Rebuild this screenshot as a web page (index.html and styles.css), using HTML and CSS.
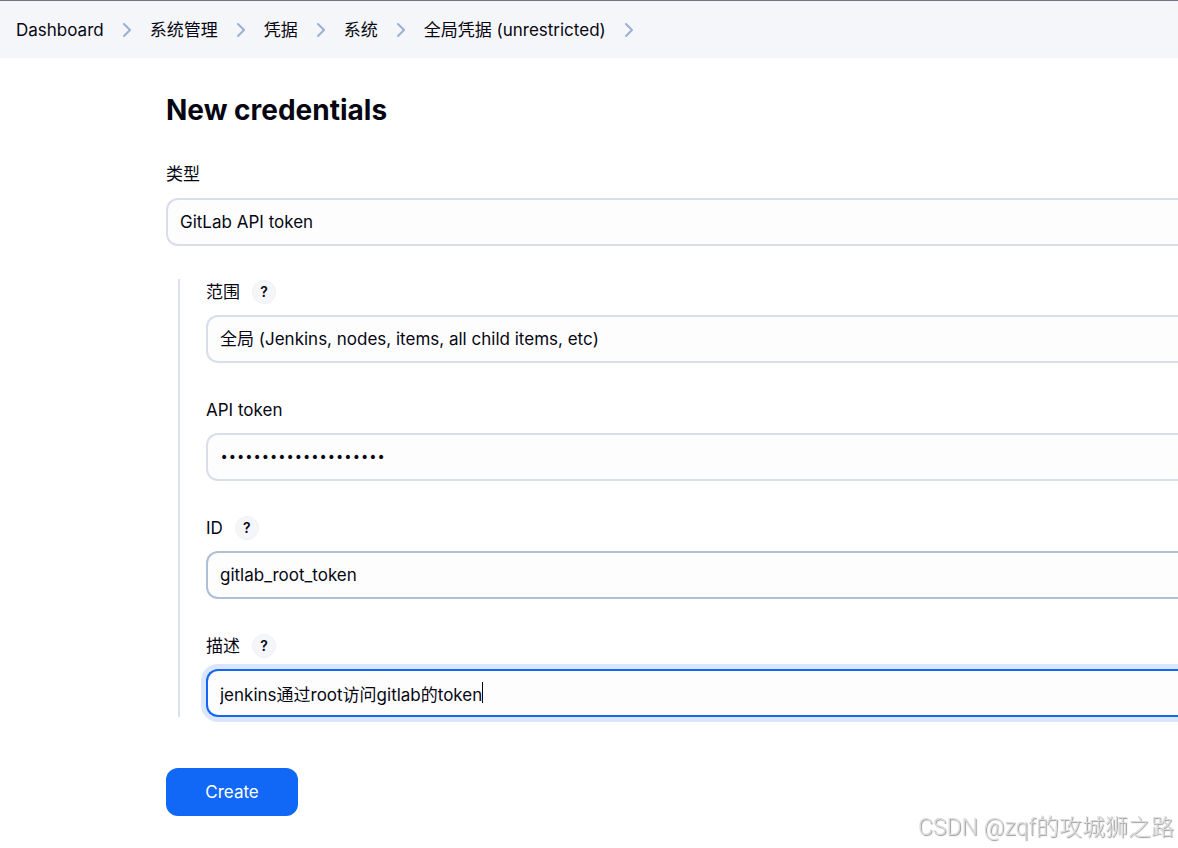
FILE: index.html
```html
<!DOCTYPE html>
<html lang="zh-CN">
<head>
    <meta charset="UTF-8">
    <meta name="viewport" content="width=device-width, initial-scale=1.0">
    <title>New credentials [Jenkins]</title>
    <link rel="stylesheet" href="styles.css">
</head>
<body>
    <nav class="breadcrumbs">
        <a href="#">Dashboard</a>
        <svg class="chevron" viewBox="0 0 8 14"><path d="M1 1l6 6-6 6"/></svg>
        <a href="#">系统管理</a>
        <svg class="chevron" viewBox="0 0 8 14"><path d="M1 1l6 6-6 6"/></svg>
        <a href="#">凭据</a>
        <svg class="chevron" viewBox="0 0 8 14"><path d="M1 1l6 6-6 6"/></svg>
        <a href="#">系统</a>
        <svg class="chevron" viewBox="0 0 8 14"><path d="M1 1l6 6-6 6"/></svg>
        <a href="#">全局凭据 (unrestricted)</a>
        <svg class="chevron" viewBox="0 0 8 14"><path d="M1 1l6 6-6 6"/></svg>
    </nav>

    <main class="content">
        <h1>New credentials</h1>

        <form class="form">
            <div class="field">
                <div class="field-label">
                    <label for="kind">类型</label>
                </div>
                <select id="kind" class="input">
                    <option>GitLab API token</option>
                </select>
            </div>

            <div class="group">
                <div class="field">
                    <div class="field-label">
                        <label for="scope">范围</label>
                        <button type="button" class="help">?</button>
                    </div>
                    <select id="scope" class="input">
                        <option>全局 (Jenkins, nodes, items, all child items, etc)</option>
                    </select>
                </div>

                <div class="field">
                    <div class="field-label">
                        <label for="token">API token</label>
                    </div>
                    <input id="token" class="input password" type="password" value="glpat-abcdefghijklmn">
                </div>

                <div class="field">
                    <div class="field-label">
                        <label for="id">ID</label>
                        <button type="button" class="help">?</button>
                    </div>
                    <input id="id" class="input hovered" type="text" value="gitlab_root_token">
                </div>

                <div class="field">
                    <div class="field-label">
                        <label for="description">描述</label>
                        <button type="button" class="help">?</button>
                    </div>
                    <div class="caret-box">
                        <input id="description" class="input focused" type="text" value="jenkins通过root访问gitlab的token">
                        <span id="caret" class="caret"></span>
                    </div>
                </div>
            </div>

            <button type="submit" class="create">Create</button>
        </form>
    </main>

    <div class="watermark">CSDN @zqf的攻城狮之路</div>

    <script>
        const description = document.getElementById('description');
        const caret = document.getElementById('caret');

        // steady caret after the last character
        function placeCaret() {
            const style = getComputedStyle(description);
            const ctx = document.createElement('canvas').getContext('2d');
            ctx.font = `${style.fontSize} ${style.fontFamily}`;
            const textWidth = ctx.measureText(description.value).width;
            const start = parseInt(style.paddingLeft) + parseInt(style.borderLeftWidth);
            caret.style.left = `${Math.round(start + textWidth)}px`;
        }

        description.addEventListener('input', placeCaret);
        placeCaret();
    </script>
</body>
</html>
```

FILE: styles.css
```css
* {
    box-sizing: border-box;
}

body {
    margin: 0;
    background: #fff;
    color: #070713;
    font-family: Inter, "Noto Sans CJK SC", sans-serif;
    font-size: 17px;
    line-height: 24px;
}

.breadcrumbs {
    display: flex;
    align-items: center;
    gap: 19px;
    height: 58px;
    padding: 0 16px;
    background: #f5f6f9;
    border-top: 1px solid #74747f;
}

.breadcrumbs a {
    color: inherit;
    text-decoration: none;
}

.chevron {
    width: 8px;
    height: 14px;
    fill: none;
    stroke: #9ab1d2;
    stroke-width: 2;
    stroke-linecap: round;
    stroke-linejoin: round;
}

.content {
    padding: 32px 0 32px 166px;
}

h1 {
    margin: 0 0 31px;
    font-size: 28px;
    font-weight: 700;
    line-height: 40px;
}

.field-label {
    display: flex;
    align-items: center;
    gap: 12px;
    height: 26px;
    margin-bottom: 11px;
}

.group .field-label {
    margin-bottom: 10px;
}

.help {
    width: 24px;
    height: 24px;
    padding: 0;
    border: 1px solid #eff1f8;
    border-radius: 50%;
    background: #f5f6fa;
    color: #070713;
    font-family: inherit;
    font-size: 14px;
    font-weight: 600;
    line-height: 22px;
}

/* fields run up to the edge of the window */
.input {
    display: block;
    appearance: none;
    width: 100%;
    height: 48px;
    margin: 0;
    padding: 0 12px;
    border: 2px solid #d9deeb;
    border-right: 0;
    border-radius: 12px 0 0 12px;
    outline: none;
    background: #fdfdfe;
    color: #070713;
    font-family: inherit;
    font-size: 17px;
    line-height: 24px;
}

.password {
    font-family: "DejaVu Sans", sans-serif;
    font-size: 14px;
}

.hovered {
    border-color: #afbfd9;
}

.focused {
    border-color: #1267f5;
    box-shadow: 0 0 0 5px #d9e6fd;
    caret-color: transparent;
}

.caret-box {
    position: relative;
}

.caret {
    position: absolute;
    top: 13px;
    width: 1px;
    height: 21px;
    background: #070713;
}

.group {
    display: flex;
    flex-direction: column;
    gap: 34px;
    margin: 33px 0 0 12px;
    padding-left: 26px;
    border-left: 2px solid #dbe0f0;
}

.create {
    width: 132px;
    height: 48px;
    margin-top: 51px;
    border: 0;
    border-radius: 12px;
    background: #1168f7;
    color: #fff;
    font-family: inherit;
    font-size: 17px;
}

.watermark {
    position: fixed;
    right: 4px;
    bottom: 4px;
    color: #dcdcdc;
    font-family: Roboto, "Noto Sans CJK SC", sans-serif;
    font-size: 23px;
    font-weight: 300;
    line-height: 32px;
    text-shadow: 1px 1px 1px #999;
}
```
